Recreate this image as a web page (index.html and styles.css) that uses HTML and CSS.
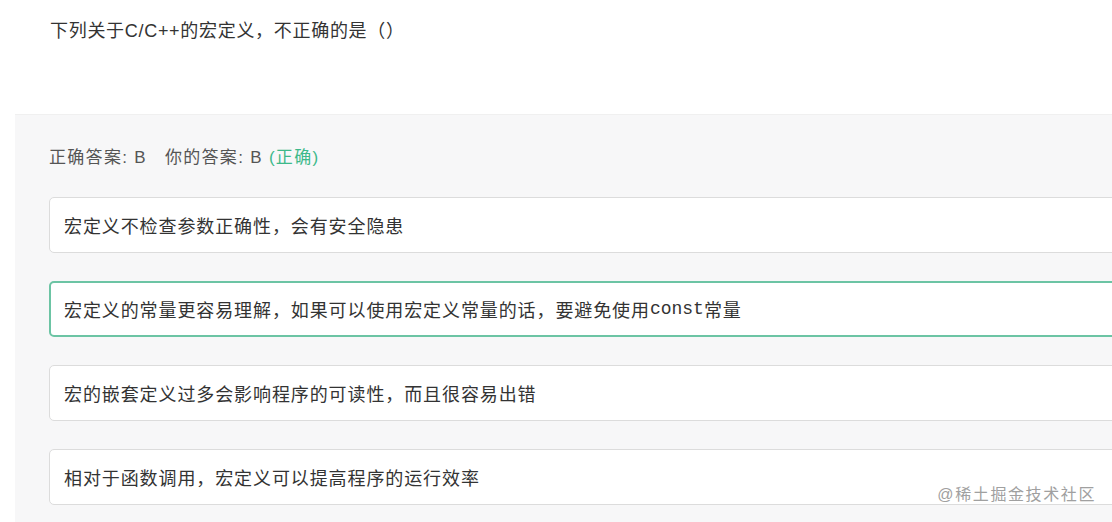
FILE: index.html
```html
<!DOCTYPE html>
<html lang="zh-CN">
<head>
<meta charset="utf-8">
<title>题目</title>
<link rel="stylesheet" href="styles.css">
</head>
<body>
<div class="page">
  <div class="question">下列关于C/C++的宏定义，不正确的是（）</div>
  <div class="panel">
    <div class="result">正确答案: B&nbsp;&nbsp; 你的答案: B <span class="ok">(正确)</span></div>
    <div class="options">
      <div class="option">宏定义不检查参数正确性，会有安全隐患</div>
      <div class="option selected">宏定义的常量更容易理解，如果可以使用宏定义常量的话，要避免使用<span class="code">const</span>常量</div>
      <div class="option">宏的嵌套定义过多会影响程序的可读性，而且很容易出错</div>
      <div class="option">相对于函数调用，宏定义可以提高程序的运行效率</div>
    </div>
  </div>
  <div class="watermark">@稀土掘金技术社区</div>
</div>
</body>
</html>
```
FILE: styles.css
```css
html, body {
  margin: 0;
  padding: 0;
  background: #ffffff;
  overflow: hidden;
}
.page {
  position: relative;
  width: 1112px;
  height: 522px;
  overflow: hidden;
  font-family: "Liberation Sans", "Noto Sans CJK SC", sans-serif;
  color: #333333;
}
.question {
  padding: 19px 0 0 50px;
  height: 114px;
  box-sizing: border-box;
  font-size: 18px;
  line-height: 24px;
  letter-spacing: 0.7px;
  color: #333333;
}
.panel {
  margin-left: 15px;
  width: 1160px;
  background: #f7f7f8;
  border-top: 1px solid #f0f0f0;
  padding: 31px 0 20px 34px;
  box-sizing: border-box;
}
.result {
  font-size: 17px;
  line-height: 24px;
  letter-spacing: 1.3px;
  color: #555555;
  margin-bottom: 27px;
}
.ok {
  color: #3db98a;
}
.options {
  display: flex;
  flex-direction: column;
  gap: 28px;
}
.option {
  height: 56px;
  box-sizing: border-box;
  background: #ffffff;
  border: 1px solid #dcdcdc;
  border-radius: 5px;
  padding: 0 14px;
  display: flex;
  align-items: center;
  font-size: 18px;
  letter-spacing: 0.9px;
  color: #333333;
}
.option.selected {
  border: 2px solid #6cc4a4;
  padding: 0 13px;
}
.code {
  font-family: "Liberation Mono", monospace;
  letter-spacing: 0;
}
.watermark {
  position: absolute;
  right: 16px;
  top: 484px;
  font-size: 16px;
  line-height: 22px;
  color: #a0a0a0;
  letter-spacing: 1.6px;
}
```
